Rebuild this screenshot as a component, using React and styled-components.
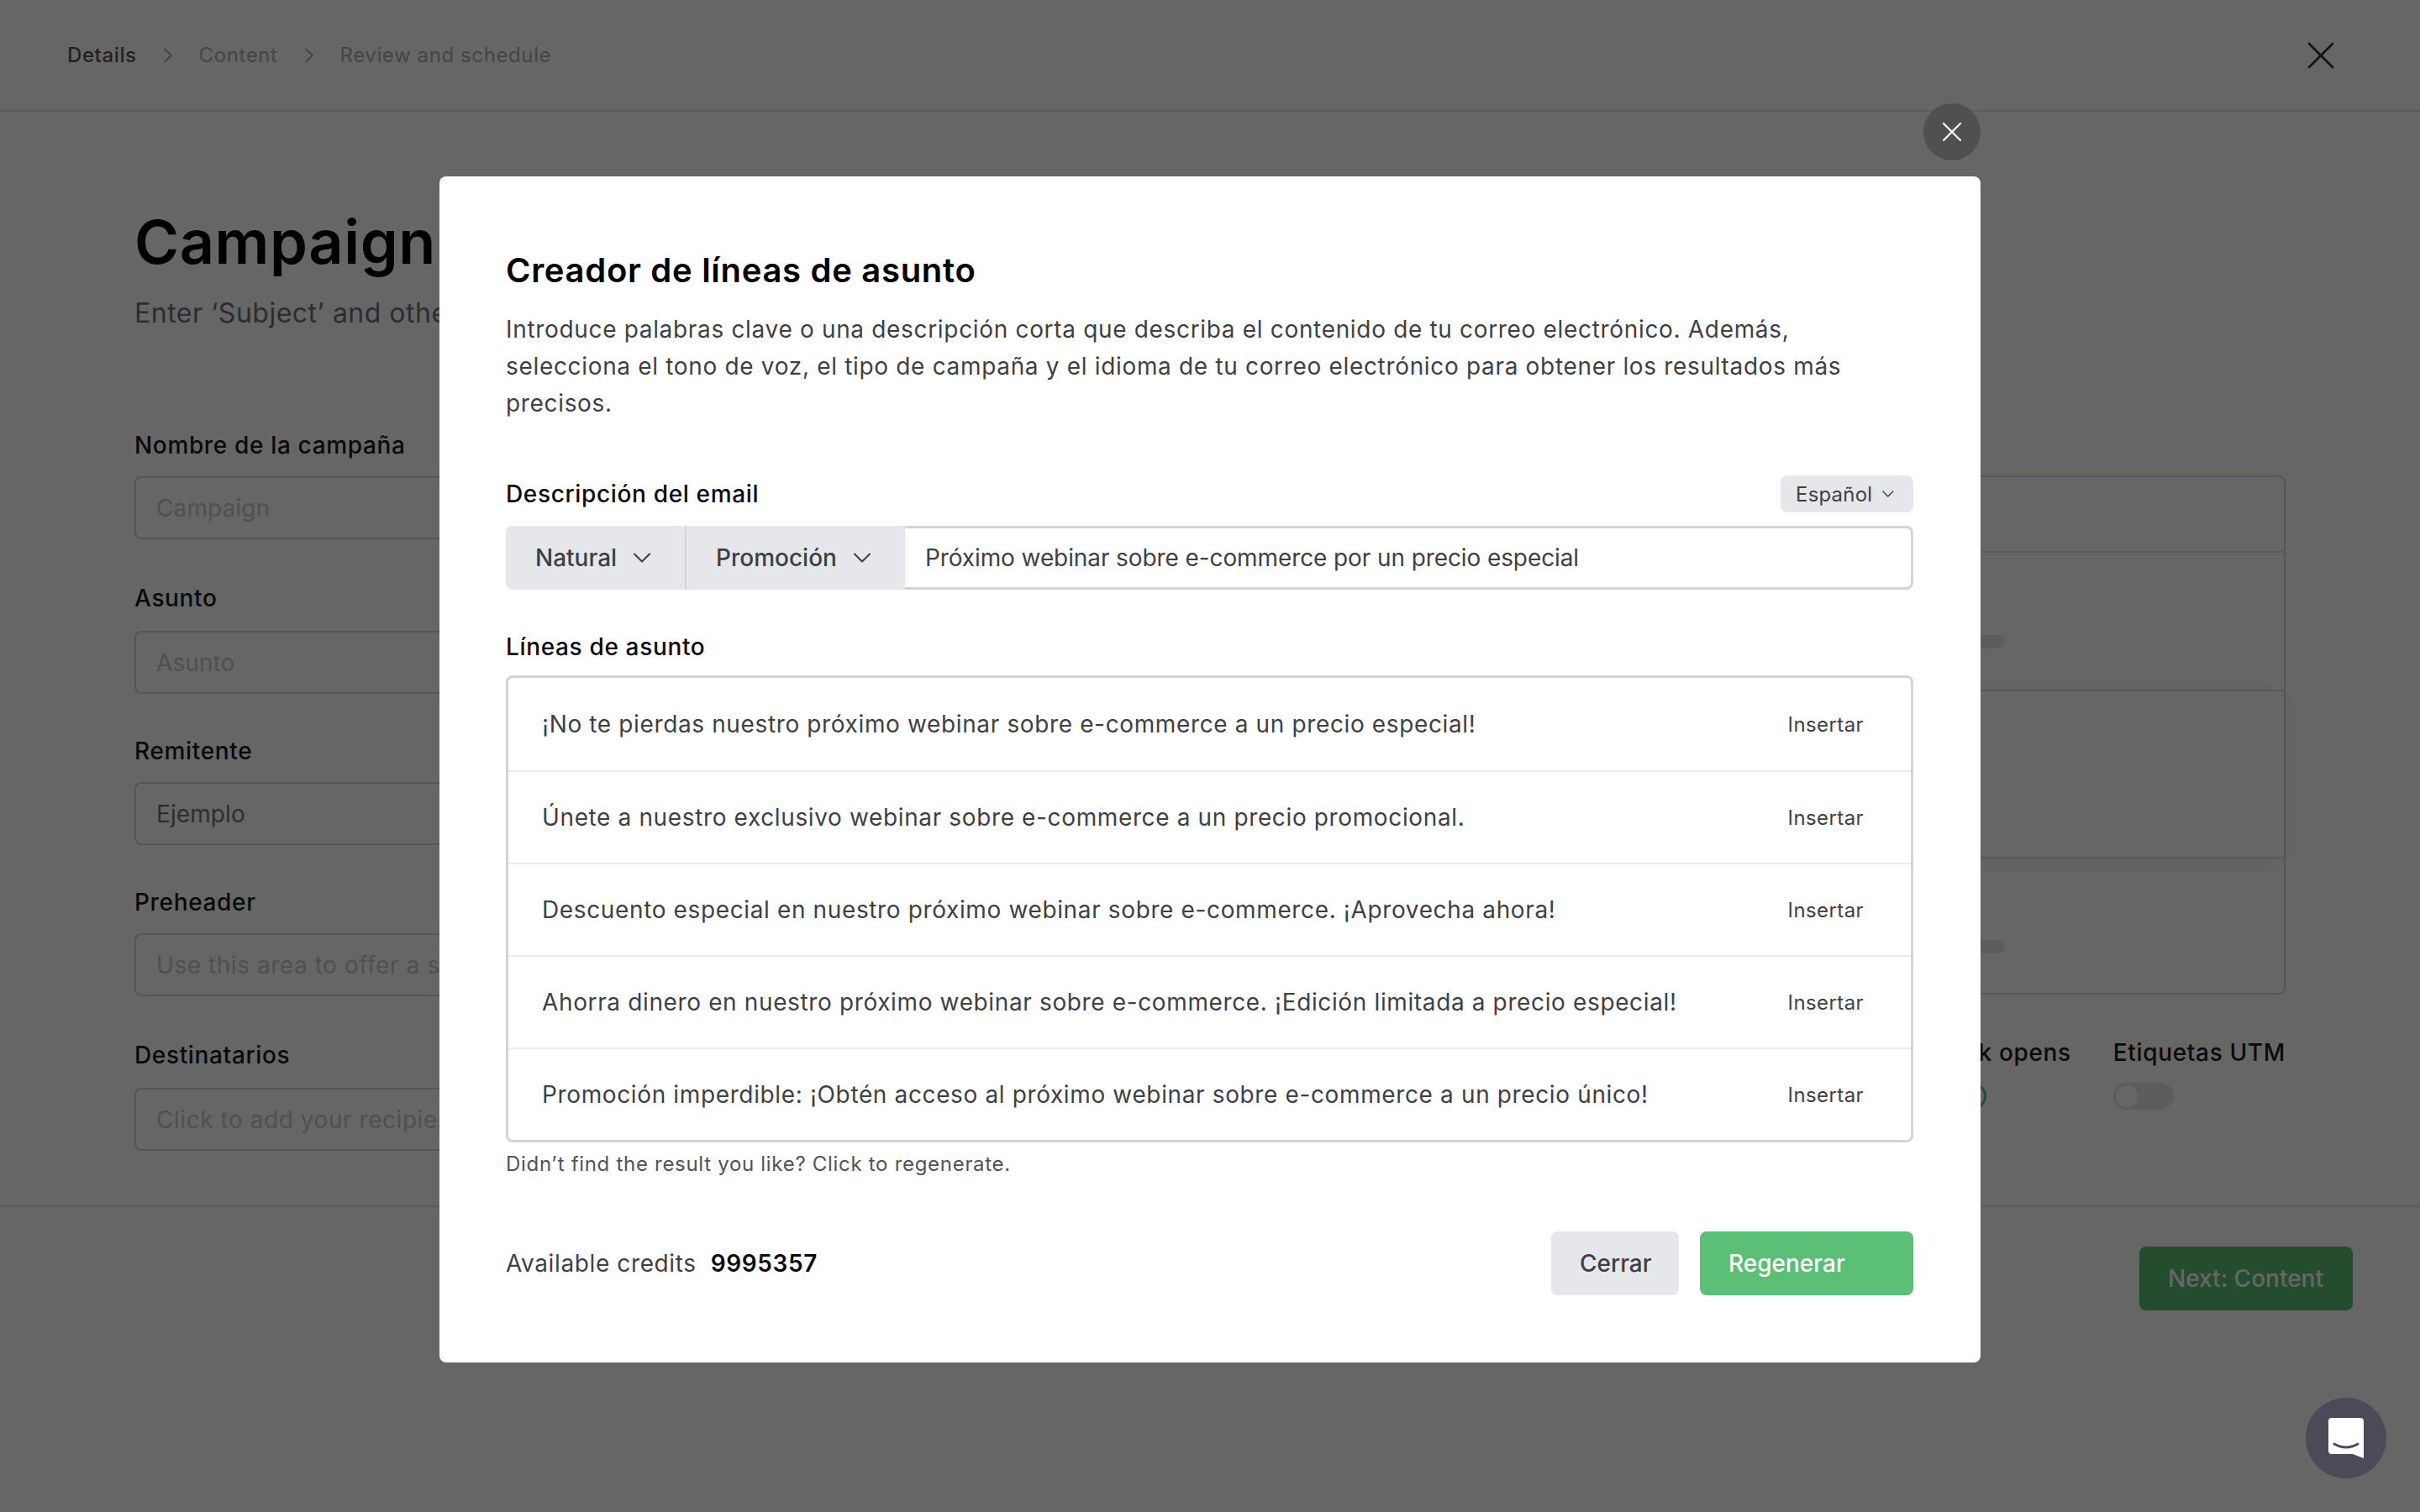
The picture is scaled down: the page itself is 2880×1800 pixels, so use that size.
import React from "react";
import styled, { createGlobalStyle } from "styled-components";
import { ChevronDown, ChevronRight, X } from "lucide-react";

const Global = createGlobalStyle`
  html, body { margin: 0; padding: 0; background: #fff; }
  body { font-family: Inter, "Noto Sans", sans-serif; color: #111; height: 1800px; overflow: hidden; }
  * { box-sizing: border-box; }
`;

const Page = styled.div`
  width: 2880px;
  height: 1800px;
  display: flex;
  flex-direction: column;
`;
const TopBar = styled.header`
  height: 133px;
  border-bottom: 2px solid #e5e7eb;
  padding: 0 104px 0 80px;
  display: flex;
  align-items: center;
  justify-content: space-between;
`;
const Steps = styled.nav`
  display: flex;
  align-items: center;
  gap: 22px;
  color: #9ca3af;
`;
const Step = styled.span`
  font-size: 24px;
  letter-spacing: 0.6px;
  font-weight: ${(p) => (p.$active ? 500 : 400)};
  color: ${(p) => (p.$active ? "#52525b" : "#a9adb5")};
`;
const CloseLarge = styled.button`
  all: unset;
  display: flex;
  color: #333;
  margin-right: -14px;
`;
const Main = styled.main`
  height: 1302px;
  padding: 111px 160px 0;
  display: flex;
  justify-content: space-between;
`;
const LeftColumn = styled.section`
  width: 1280px;
  display: flex;
  flex-direction: column;
`;
const Title = styled.h1`
  margin: 0;
  font-size: 72px;
  line-height: 88px;
  font-weight: 600;
  color: #000;
  letter-spacing: 0.6px;
`;
const Subtitle = styled.p`
  margin: 21px 0 0;
  font-size: 32px;
  line-height: 40px;
  letter-spacing: 0.5px;
  color: #6b7280;
`;
const FieldStack = styled.div`
  margin-top: 119px;
  display: flex;
  flex-direction: column;
`;
const Field = styled.div`
  display: flex;
  flex-direction: column;
  gap: ${(p) => p.$gap || 19}px;
  margin-top: ${(p) => p.$top || 0}px;
`;
const FieldLabel = styled.label`
  font-size: 28px;
  line-height: 36px;
  font-weight: 500;
  letter-spacing: 0.65px;
  color: #18181b;
`;
const PageInput = styled.input`
  height: 75px;
  width: 100%;
  border: 2px solid #d1d5db;
  border-radius: 8px;
  padding: 0 24px;
  background: #fff;
  font: 400 28px Inter, sans-serif;
  letter-spacing: ${(p) => (p.$spaced ? "0.55px" : "0.1px")};
  color: #71717a;
  &::placeholder { color: #c6c9cf; opacity: 1; }
`;
const RightColumn = styled.section`
  width: 1220px;
  margin-top: 322px;
  display: flex;
  flex-direction: column;
`;
const Panel = styled.div`
  border: 2px solid #d1d5db;
  border-radius: 8px;
  height: 618px;
  display: flex;
  flex-direction: column;
`;
const PanelRow = styled.div`
  height: ${(p) => p.$h}px;
  border-bottom: ${(p) => (p.$last ? "0" : "2px solid #dfe1e6")};
  display: flex;
  flex-direction: column;
  justify-content: flex-end;
  padding: 0 0 ${(p) => p.$pad || 0}px 158px;
  box-shadow: ${(p) => (p.$raised ? "0 4px 24px rgba(0,0,0,.07)" : "none")};
`;
const SkeletonBar = styled.div`
  width: 726px;
  height: 16px;
  border-radius: 8px;
  background: #e5e7eb;
`;
const ToggleRow = styled.div`
  margin-top: 51px;
  display: flex;
  justify-content: flex-end;
  gap: 50px;
`;
const ToggleField = styled.div`
  display: flex;
  flex-direction: column;
  gap: 18px;
`;
const Toggle = styled.div`
  width: 72px;
  height: 32px;
  border-radius: 16px;
  background: ${(p) => (p.$on ? "#5bbf76" : "#e5e7eb")};
  padding: 3px;
  display: flex;
  justify-content: ${(p) => (p.$on ? "flex-end" : "flex-start")};
`;
const Knob = styled.div`
  width: 26px;
  height: 26px;
  border-radius: 50%;
  background: #fff;
`;
const Footer = styled.footer`
  border-top: 2px solid #e5e7eb;
  padding: 47px 80px 0;
  display: flex;
  justify-content: flex-end;
`;
const Button = styled.button`
  all: unset;
  box-sizing: border-box;
  height: 76px;
  width: ${(p) => p.$w}px;
  padding: 0 34px;
  border-radius: 8px;
  display: flex;
  align-items: center;
  white-space: nowrap;
  font: 500 28px Inter, sans-serif;
  letter-spacing: 0;
  color: ${(p) => (p.$primary ? "#fff" : "#3f3f46")};
  background: ${(p) => (p.$primary ? "#5bbf76" : "#e5e7eb")};
`;
const Overlay = styled.div`
  position: fixed;
  inset: 0;
  background: rgba(0, 0, 0, 0.6);
  display: flex;
  justify-content: center;
  align-items: flex-start;
  padding-top: 210px;
`;
const Modal = styled.div`
  position: relative;
  width: 1834px;
  height: 1412px;
  background: #fff;
  border-radius: 8px;
  padding: 90px 80px 80px 79px;
  display: flex;
  flex-direction: column;
`;
const ModalClose = styled.button`
  all: unset;
  position: absolute;
  top: -87px;
  right: 0;
  width: 68px;
  height: 68px;
  border-radius: 50%;
  background: #505050;
  color: #fff;
  display: flex;
  align-items: center;
  justify-content: center;
`;
const ModalTitle = styled.h2`
  margin: 0;
  font-size: 40px;
  line-height: 44px;
  font-weight: 600;
  letter-spacing: 0.7px;
  color: #000;
`;
const ModalText = styled.p`
  margin: 26px 0 0;
  font-size: 28px;
  line-height: 44px;
  letter-spacing: 0.67px;
  color: #3f3f46;
`;
const SectionHead = styled.div`
  margin-top: ${(p) => p.$top}px;
  display: flex;
  align-items: center;
  justify-content: space-between;
  height: 44px;
`;
const SectionLabel = styled.span`
  font-size: 28px;
  font-weight: 500;
  letter-spacing: 0.65px;
  color: #0a0a0a;
`;
const LangChip = styled.button`
  all: unset;
  box-sizing: border-box;
  height: 44px;
  width: 158px;
  padding: 0 18px;
  border-radius: 8px;
  background: #e5e7eb;
  display: flex;
  align-items: center;
  gap: 7px;
  font: 400 24px Inter, sans-serif;
  letter-spacing: 0.2px;
  color: #3f3f46;
`;
const InputGroup = styled.div`
  margin-top: 16px;
  height: 76px;
  display: flex;
  border-radius: 8px;
`;
const GroupSelect = styled.button`
  all: unset;
  box-sizing: border-box;
  height: 76px;
  width: ${(p) => p.$w}px;
  padding-left: 35px;
  background: #e5e7eb;
  display: flex;
  align-items: center;
  gap: 12px;
  font: 500 28px Inter, sans-serif;
  letter-spacing: 0;
  color: #3f3f46;
  border-radius: ${(p) => (p.$first ? "8px 0 0 8px" : "0")};
  border-right: ${(p) => (p.$first ? "2px solid #d4d4d8" : "0")};
`;
const GroupInput = styled.input`
  flex: 1;
  min-width: 0;
  height: 76px;
  border: 3px solid #d4d4d8;
  border-left: 0;
  border-radius: 0 8px 8px 0;
  padding: 0 24px;
  background: #fff;
  font: 400 28px Inter, sans-serif;
  letter-spacing: -0.1px;
  color: #3f3f46;
  outline: none;
`;
const ResultList = styled.ul`
  list-style: none;
  margin: 12px 0 0;
  padding: 0;
  border: 3px solid #d4d4d8;
  border-radius: 8px;
`;
const ResultRow = styled.li`
  height: 110px;
  padding: 0 56px 0 40px;
  display: flex;
  align-items: center;
  justify-content: space-between;
  border-top: ${(p) => (p.$first ? "0" : "2px solid #ececef")};
  font-size: 28px;
  letter-spacing: 0.63px;
  color: #3f3f46;
`;
const InsertAction = styled.span`
  font-size: 24px;
  font-weight: 400;
  letter-spacing: 0.4px;
  color: #3f3f46;
`;
const Hint = styled.p`
  margin: 10px 0 0;
  font-size: 24px;
  line-height: 32px;
  letter-spacing: 0.7px;
  color: #52525b;
`;
const ModalFooter = styled.div`
  margin-top: auto;
  display: flex;
  align-items: center;
  justify-content: space-between;
`;
const Credits = styled.div`
  display: flex;
  align-items: center;
  gap: 17px;
  font-size: 28px;
  letter-spacing: 0.62px;
  color: #3f3f46;
`;
const CreditValue = styled.strong`
  font-weight: 600;
  color: #0a0a0a;
`;
const Actions = styled.div`
  display: flex;
  gap: 25px;
`;
const ChatBubble = styled.button`
  all: unset;
  position: fixed;
  right: 40px;
  bottom: 40px;
  width: 96px;
  height: 96px;
  border-radius: 50%;
  background: #4a4a58;
  display: flex;
`;

const lines = [
  "¡No te pierdas nuestro próximo webinar sobre e-commerce a un precio especial!",
  "Únete a nuestro exclusivo webinar sobre e-commerce a un precio promocional.",
  "Descuento especial en nuestro próximo webinar sobre e-commerce. ¡Aprovecha ahora!",
  "Ahorra dinero en nuestro próximo webinar sobre e-commerce. ¡Edición limitada a precio especial!",
  "Promoción imperdible: ¡Obtén acceso al próximo webinar sobre e-commerce a un precio único!",
];

const fields = [
  { label: "Nombre de la campaña", placeholder: "Campaign", top: 0 },
  { label: "Asunto", placeholder: "Asunto", top: 52, gap: 21 },
  { label: "Remitente", value: "Ejemplo", top: 50 },
  { label: "Preheader", placeholder: "Use this area to offer a short preview of your email", top: 50, spaced: true },
  { label: "Destinatarios", placeholder: "Click to add your recipients", top: 52, gap: 21, spaced: true },
];

export default function App() {
  return (
    <>
      <Global />
      <Page>
        <TopBar>
          <Steps>
            <Step $active>Details</Step>
            <ChevronRight size={30} strokeWidth={1.5} />
            <Step>Content</Step>
            <ChevronRight size={30} strokeWidth={1.5} />
            <Step>Review and schedule</Step>
          </Steps>
          <CloseLarge aria-label="Close">
            <X size={56} strokeWidth={1.2} />
          </CloseLarge>
        </TopBar>
        <Main>
          <LeftColumn>
            <Title>Campaign</Title>
            <Subtitle>Enter ‘Subject’ and other</Subtitle>
            <FieldStack>
              {fields.map((f) => (
                <Field key={f.label} $top={f.top} $gap={f.gap}>
                  <FieldLabel>{f.label}</FieldLabel>
                  <PageInput readOnly placeholder={f.placeholder} value={f.value} $spaced={f.spaced} />
                </Field>
              ))}
            </FieldStack>
          </LeftColumn>
          <RightColumn>
            <Panel>
              <PanelRow $h={90} />
              <PanelRow $h={165} $pad={49}><SkeletonBar /></PanelRow>
              <PanelRow $h={199} $raised />
              <PanelRow $h={160} $pad={47} $last><SkeletonBar /></PanelRow>
            </Panel>
            <ToggleRow>
              <ToggleField>
                <FieldLabel>Track opens</FieldLabel>
                <Toggle $on><Knob /></Toggle>
              </ToggleField>
              <ToggleField>
                <FieldLabel>Etiquetas UTM</FieldLabel>
                <Toggle><Knob /></Toggle>
              </ToggleField>
            </ToggleRow>
          </RightColumn>
        </Main>
        <Footer>
          <Button $primary $w={254}>Next: Content</Button>
        </Footer>
      </Page>
      <Overlay>
        <Modal>
          <ModalClose aria-label="Cerrar">
            <X size={40} strokeWidth={1.3} />
          </ModalClose>
          <ModalTitle>Creador de líneas de asunto</ModalTitle>
          <ModalText>
            Introduce palabras clave o una descripción corta que describa el contenido de tu correo electrónico. Además, selecciona el tono de voz, el tipo de campaña y el idioma de tu correo electrónico para obtener los resultados más precisos.
          </ModalText>
          <SectionHead $top={64}>
            <SectionLabel>Descripción del email</SectionLabel>
            <LangChip>Español <ChevronDown size={32} strokeWidth={1.4} /></LangChip>
          </SectionHead>
          <InputGroup>
            <GroupSelect $first $w={215}>Natural <ChevronDown size={36} strokeWidth={1.4} /></GroupSelect>
            <GroupSelect $w={260}>Promoción <ChevronDown size={36} strokeWidth={1.4} /></GroupSelect>
            <GroupInput readOnly value="Próximo webinar sobre e-commerce por un precio especial" />
          </InputGroup>
          <SectionHead $top={46}>
            <SectionLabel>Líneas de asunto</SectionLabel>
          </SectionHead>
          <ResultList>
            {lines.map((l, i) => (
              <ResultRow key={l} $first={i === 0}>
                <span>{l}</span>
                <InsertAction>Insertar</InsertAction>
              </ResultRow>
            ))}
          </ResultList>
          <Hint>Didn’t find the result you like? Click to regenerate.</Hint>
          <ModalFooter>
            <Credits>
              Available credits
              <CreditValue>9995357</CreditValue>
            </Credits>
            <Actions>
              <Button $w={152}>Cerrar</Button>
              <Button $primary $w={254}>Regenerar</Button>
            </Actions>
          </ModalFooter>
        </Modal>
      </Overlay>
      <ChatBubble aria-label="Chat">
        <svg width="96" height="96" viewBox="0 0 96 96">
          <path d="M31 24H65a4 4 0 0 1 4 4V72L56 67H31a4 4 0 0 1-4-4V28a4 4 0 0 1 4-4z" fill="#fff" />
          <path d="M34 55Q48 63 62 55" fill="none" stroke="#4a4a58" strokeWidth="3" strokeLinecap="round" />
        </svg>
      </ChatBubble>
    </>
  );
}
